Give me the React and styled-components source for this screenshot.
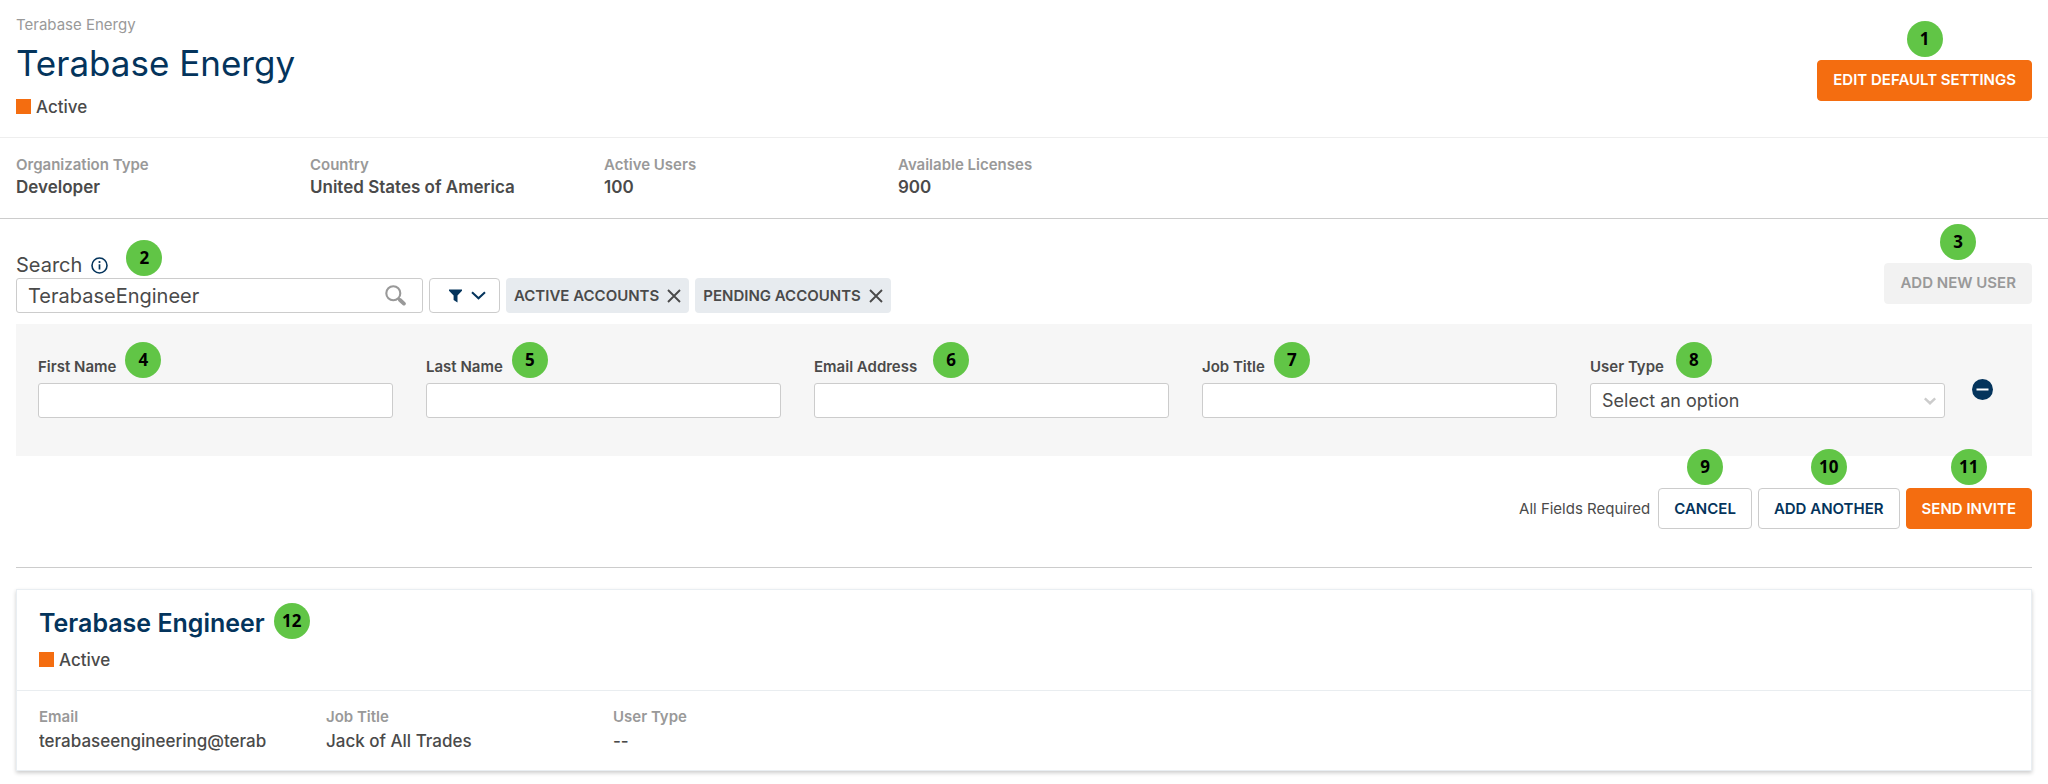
import React, { useState } from 'react';
import styled, { createGlobalStyle, css, ThemeProvider } from 'styled-components';

const theme = {
  colors: {
    navy: '#04345c',
    orange: '#f46d10',
    text: '#4a4a4a',
    muted: '#999999',
    border: '#cccccc',
    lightBorder: '#eeeeee',
    panel: '#f6f6f6',
    chip: '#e7ebef',
    badge: '#61c546',
  },
};

const GlobalStyle = createGlobalStyle`
  * {
    box-sizing: border-box;
  }

  body {
    margin: 0;
    background-color: #ffffff;
    color: ${theme.colors.text};
    font-family: Inter, 'Liberation Sans', sans-serif;
    font-size: 17px;
    line-height: 24px;
  }

  button, input, select {
    font-family: inherit;
    color: inherit;
    margin: 0;
  }
`;

const Header = styled('header')`
  display: flex;
  justify-content: space-between;
  align-items: center;
  padding: 15px 16px 18px;
  border-bottom: 1px solid ${props => props.theme.colors.lightBorder};
`;

const HeaderActions = styled('div')`
  padding-top: 26px;
`;

const Breadcrumb = styled('a')`
  display: block;
  font-size: 15px;
  line-height: 20px;
  color: ${props => props.theme.colors.muted};
  text-decoration: none;
`;

const Title = styled('h1')`
  margin: 6px 0 10px;
  font-size: 35px;
  line-height: 44px;
  font-weight: 400;
  color: ${props => props.theme.colors.navy};
`;

const Status = styled('div')`
  display: flex;
  align-items: center;
  gap: 5px;
  font-weight: 500;

  &::before {
    content: '';
    width: 15px;
    height: 15px;
    margin-bottom: 2px;
    background-color: ${props => props.theme.colors.orange};
  }
`;

const Details = styled('dl')`
  display: flex;
  margin: 0;
  padding: 17px 16px 19px;
  border-bottom: 1px solid ${props => props.theme.colors.border};

  ${props =>
    props.$inCard &&
    css`
      padding: 16px 22px 17px;
      border-bottom: none;
    `}
`;

const Detail = styled('div')`
  flex: none;
  width: ${props => (props.$inCard ? '287px' : '294px')};
  padding-right: 54px;
`;

const DetailLabel = styled('dt')`
  font-size: 15px;
  line-height: 20px;
  font-weight: 600;
  color: ${props => props.theme.colors.muted};
`;

const DetailValue = styled('dd')`
  margin: ${props => (props.$inCard ? '2px 0 0' : 0)};
  overflow: hidden;
  white-space: nowrap;
  font-weight: ${props => (props.$inCard ? 500 : 600)};
`;

const Main = styled('main')`
  padding: 0 16px;
`;

const Toolbar = styled('div')`
  display: flex;
  justify-content: space-between;
  align-items: center;
  padding: 34px 0 11px;
`;

const SearchRow = styled('div')`
  display: flex;
  gap: 6px;
  margin-top: 1px;
`;

const SearchBox = styled('div')`
  display: flex;
  align-items: center;
  width: 407px;
  height: 35px;
  padding: 0 16px 0 11px;
  border: 1px solid ${props => props.theme.colors.border};
  border-radius: 3px;
`;

const SearchInput = styled('input')`
  flex: 1;
  min-width: 0;
  padding: 0;
  border: none;
  outline: none;
  background: transparent;
  font-size: 20px;
  line-height: 24px;
`;

const FilterButton = styled('button')`
  display: flex;
  justify-content: center;
  align-items: center;
  gap: 9px;
  width: 71px;
  height: 35px;
  padding: 0 0 0 6px;
  border: 1px solid ${props => props.theme.colors.border};
  border-radius: 4px;
  background-color: #ffffff;
  cursor: pointer;
`;

const Chip = styled('span')`
  display: flex;
  align-items: center;
  gap: 8px;
  height: 35px;
  padding: 0 8px;
  border-radius: 4px;
  background-color: ${props => props.theme.colors.chip};
  font-size: 15px;
  font-weight: 600;
`;

const IconButton = styled('button')`
  display: flex;
  padding: 0;
  border: none;
  background: none;
  cursor: pointer;
`;

const RemoveButton = styled(IconButton)`
  align-self: flex-start;
  margin-top: 22px;
`;

const Button = styled('button')`
  height: 41px;
  padding: 0 15px;
  border: 1px solid ${props => props.theme.colors.border};
  border-radius: 4px;
  background-color: #ffffff;
  color: ${props => props.theme.colors.navy};
  font-size: 15px;
  line-height: 20px;
  font-weight: 600;
  cursor: pointer;

  ${props =>
    props.$primary &&
    css`
      border-color: ${props.theme.colors.orange};
      background-color: ${props.theme.colors.orange};
      color: #ffffff;
    `}

  &:disabled {
    border-color: #f2f2f2;
    background-color: #f2f2f2;
    color: ${props => props.theme.colors.muted};
    cursor: default;
  }
`;

const BadgeAnchor = styled('div')`
  position: relative;
  display: flex;
  align-items: center;
  width: max-content;
`;

const Badge = styled('span')`
  position: absolute;
  display: flex;
  justify-content: center;
  align-items: center;
  width: 36px;
  height: 36px;
  border-radius: 50%;
  background-color: ${props => props.theme.colors.badge};
  color: #000000;
  font: 700 17px/20px 'Noto Sans', sans-serif;

  ${props =>
    props.$above
      ? css`
          bottom: calc(100% + 3px);
          left: calc(50% - 18px);
        `
      : css`
          top: calc(50% - 25px);
          left: calc(100% + ${props.$gap}px);
        `}
`;

const SearchLabel = styled('label')`
  margin-right: 9px;
  font-size: 20px;
`;

const InvitePanel = styled('div')`
  display: flex;
  gap: 27px;
  padding: 33px 39px 38px 22px;
  background-color: ${props => props.theme.colors.panel};
`;

const Fields = styled('div')`
  flex: 1;
  display: grid;
  grid-template-columns: repeat(5, minmax(0, 1fr));
  gap: 33px;
`;

const FieldLabel = styled('label')`
  font-size: 15px;
  line-height: 20px;
  font-weight: 600;
`;

const fieldBox = css`
  display: block;
  width: 100%;
  height: 35px;
  padding: 0 11px;
  border: 1px solid ${props => props.theme.colors.border};
  border-radius: 3px;
  background-color: #ffffff;
  font-size: 18px;
`;

const FieldInput = styled('input')`
  ${fieldBox}
  margin-top: 6px;
`;

const SelectWrapper = styled('div')`
  display: grid;
  align-items: center;
  margin-top: 6px;

  > * {
    grid-area: 1 / 1;
  }

  > svg {
    justify-self: end;
    margin-right: 9px;
    pointer-events: none;
  }
`;

const FieldSelect = styled('select')`
  ${fieldBox}
  appearance: none;
`;

const InviteActions = styled('div')`
  display: flex;
  justify-content: flex-end;
  align-items: center;
  gap: 6px;
  padding: 32px 0 38px;
  border-bottom: 1px solid ${props => props.theme.colors.border};
`;

const Note = styled('span')`
  margin-right: 2px;
  font-size: 15px;
  line-height: 20px;
`;

const UserCard = styled('section')`
  margin: 21px 0 12px;
  border: 1px solid #e9eef2;
  box-shadow: 0 2px 4px rgba(0, 0, 0, 0.2);
`;

const UserCardHeader = styled('div')`
  padding: 17px 22px 18px;
  border-bottom: 1px solid #e9edf0;
`;

const UserName = styled('h2')`
  margin: 0;
  font-size: 25px;
  line-height: 32px;
  font-weight: 600;
  color: ${props => props.theme.colors.navy};
`;

const UserHeading = styled(BadgeAnchor)`
  margin-bottom: 9px;

  ${Badge} {
    top: -4px;
  }
`;

const InfoIcon = () => (
  <svg width="17" height="17" viewBox="0 0 17 17" fill="none">
    <circle cx="8.5" cy="8.5" r="7.5" stroke="#04345c" strokeWidth="1.6" />
    <circle cx="8.5" cy="5" r="1.1" fill="#04345c" />
    <path d="M8.5 7.3v5.2" stroke="#04345c" strokeWidth="1.7" />
  </svg>
);

const SearchIcon = () => (
  <svg width="21" height="21" viewBox="0 0 21 21" fill="none" stroke="#999999">
    <circle cx="8.3" cy="8.3" r="7" strokeWidth="2.1" />
    <path d="M13.4 13.4l1.6 1.6" strokeWidth="2.4" />
    <path d="M15 15l3.9 3.6" strokeWidth="3.8" strokeLinecap="round" />
  </svg>
);

const FunnelIcon = () => (
  <svg width="13" height="14" viewBox="0 0 13 14" fill="#04345c">
    <path d="M0 0.5h13v1.3L8.5 6.6V13.5L4.6 11V6.6L0 1.8z" />
  </svg>
);

const ChevronIcon = ({ width, height, color, strokeWidth }) => (
  <svg width={width} height={height} viewBox="0 0 15 9" fill="none">
    <path d="M1 1.2l6.5 6.1L14 1.2" stroke={color} strokeWidth={strokeWidth} />
  </svg>
);

const CloseIcon = () => (
  <svg width="14" height="14" viewBox="0 0 14 14" fill="none">
    <path d="M1 1l12 12M13 1L1 13" stroke="#4a4a4a" strokeWidth="1.9" />
  </svg>
);

const MinusIcon = () => (
  <svg width="21" height="21" viewBox="0 0 21 21">
    <circle cx="10.5" cy="10.5" r="10.5" fill="#04345c" />
    <path d="M4.5 10.5h12" stroke="#ffffff" strokeWidth="2" />
  </svg>
);

const organizationDetails = [
  { label: 'Organization Type', value: 'Developer' },
  { label: 'Country', value: 'United States of America' },
  { label: 'Active Users', value: '100' },
  { label: 'Available Licenses', value: '900' },
];

const userDetails = [
  { label: 'Email', value: 'terabaseengineering@terab' },
  { label: 'Job Title', value: 'Jack of All Trades' },
  { label: 'User Type', value: '--' },
];

const inviteFields = [
  { id: 'firstName', label: 'First Name', badge: 4, gap: 9 },
  { id: 'lastName', label: 'Last Name', badge: 5, gap: 9 },
  { id: 'email', label: 'Email Address', badge: 6, gap: 16, type: 'email' },
  { id: 'jobTitle', label: 'Job Title', badge: 7, gap: 9 },
];

const BadgedButton = ({ badge, children, ...props }) => (
  <BadgeAnchor>
    <Button type="button" {...props}>
      {children}
    </Button>
    <Badge $above>{badge}</Badge>
  </BadgeAnchor>
);

const DetailList = ({ items, inCard }) => (
  <Details $inCard={inCard}>
    {items.map(item => (
      <Detail key={item.label} $inCard={inCard}>
        <DetailLabel>{item.label}</DetailLabel>
        <DetailValue $inCard={inCard}>{item.value}</DetailValue>
      </Detail>
    ))}
  </Details>
);

const App = () => {
  const [search, setSearch] = useState('TerabaseEngineer');
  const [filters, setFilters] = useState([
    'ACTIVE ACCOUNTS',
    'PENDING ACCOUNTS',
  ]);

  return (
    <ThemeProvider theme={theme}>
      <GlobalStyle />
      <Header>
        <div>
          <Breadcrumb href="#organization">Terabase Energy</Breadcrumb>
          <Title>Terabase Energy</Title>
          <Status>Active</Status>
        </div>
        <HeaderActions>
          <BadgedButton badge={1} $primary>
            EDIT DEFAULT SETTINGS
          </BadgedButton>
        </HeaderActions>
      </Header>
      <DetailList items={organizationDetails} />

      <Main>
        <Toolbar>
          <div>
            <BadgeAnchor>
              <SearchLabel htmlFor="search">Search</SearchLabel>
              <InfoIcon />
              <Badge $gap={18}>2</Badge>
            </BadgeAnchor>
            <SearchRow>
              <SearchBox>
                <SearchInput
                  id="search"
                  value={search}
                  onChange={e => setSearch(e.target.value)}
                />
                <SearchIcon />
              </SearchBox>
              <FilterButton type="button" aria-label="Filter">
                <FunnelIcon />
                <ChevronIcon
                  width={15}
                  height={9}
                  color="#04345c"
                  strokeWidth={2}
                />
              </FilterButton>
              {filters.map(filter => (
                <Chip key={filter}>
                  {filter}
                  <IconButton
                    type="button"
                    aria-label={`Remove ${filter}`}
                    onClick={() =>
                      setFilters(filters.filter(f => f !== filter))
                    }>
                    <CloseIcon />
                  </IconButton>
                </Chip>
              ))}
            </SearchRow>
          </div>
          <BadgedButton badge={3} disabled>
            ADD NEW USER
          </BadgedButton>
        </Toolbar>

        <InvitePanel>
          <Fields>
            {inviteFields.map(field => (
              <div key={field.id}>
                <BadgeAnchor>
                  <FieldLabel htmlFor={field.id}>{field.label}</FieldLabel>
                  <Badge $gap={field.gap}>{field.badge}</Badge>
                </BadgeAnchor>
                <FieldInput id={field.id} type={field.type || 'text'} />
              </div>
            ))}
            <div>
              <BadgeAnchor>
                <FieldLabel htmlFor="userType">User Type</FieldLabel>
                <Badge $gap={12}>8</Badge>
              </BadgeAnchor>
              <SelectWrapper>
                <FieldSelect id="userType">
                  <option>Select an option</option>
                </FieldSelect>
                <ChevronIcon
                  width={12}
                  height={8}
                  color="#cccccc"
                  strokeWidth={3}
                />
              </SelectWrapper>
            </div>
          </Fields>
          <RemoveButton type="button" aria-label="Remove invite">
            <MinusIcon />
          </RemoveButton>
        </InvitePanel>

        <InviteActions>
          <Note>All Fields Required</Note>
          <BadgedButton badge={9}>CANCEL</BadgedButton>
          <BadgedButton badge={10}>ADD ANOTHER</BadgedButton>
          <BadgedButton badge={11} $primary>
            SEND INVITE
          </BadgedButton>
        </InviteActions>

        <UserCard>
          <UserCardHeader>
            <UserHeading>
              <UserName>Terabase Engineer</UserName>
              <Badge $gap={9}>12</Badge>
            </UserHeading>
            <Status>Active</Status>
          </UserCardHeader>
          <DetailList items={userDetails} inCard />
        </UserCard>
      </Main>
    </ThemeProvider>
  );
};

export default App;
